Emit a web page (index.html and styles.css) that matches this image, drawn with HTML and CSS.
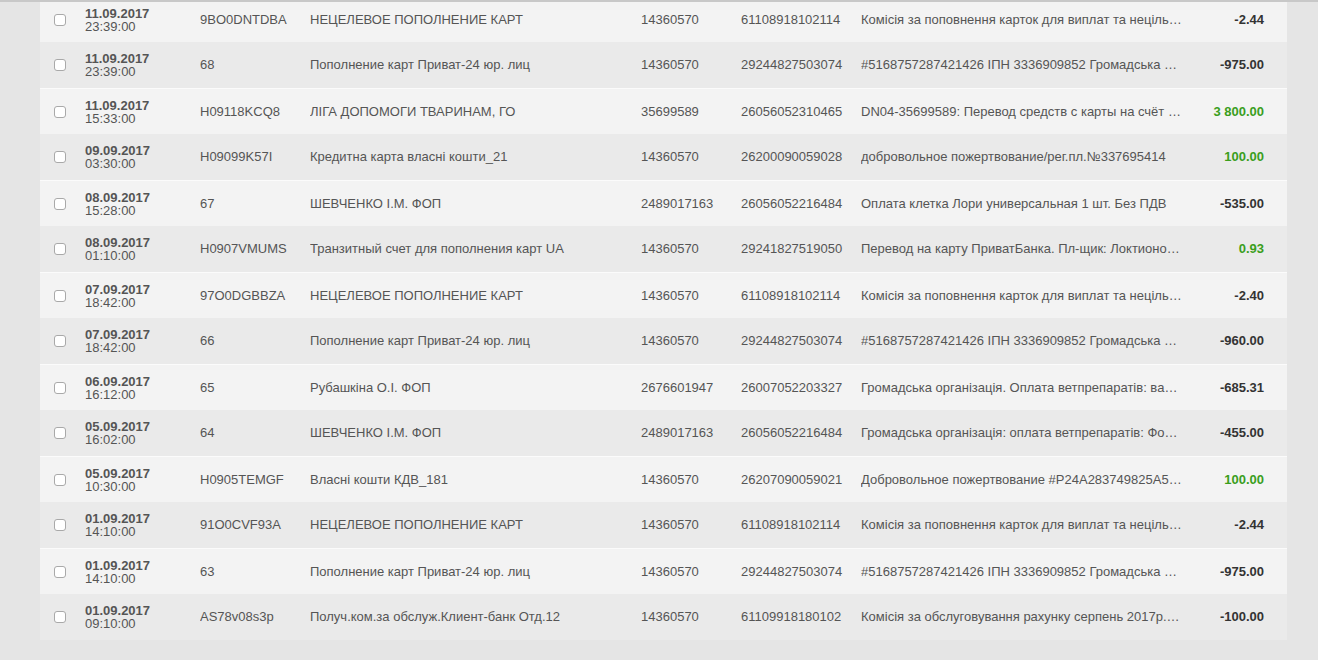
FILE: index.html
```
<!DOCTYPE html>
<html lang="uk">
<head>
<meta charset="utf-8">
<title>Виписка</title>
<link rel="stylesheet" href="styles.css">
</head>
<body>
<div class="topline"></div>
<div class="list">
  <div class="row odd"><div class="c-chk"><span class="chk"></span></div><div class="c-date"><b>11.09.2017</b><span>23:39:00</span></div><div>9BO0DNTDBA</div><div>НЕЦЕЛЕВОЕ ПОПОЛНЕНИЕ КАРТ</div><div>14360570</div><div>61108918102114</div><div class="c-desc">Комісія за поповнення карток для виплат та нецільових надходжень</div><div class="c-amt">-2.44</div></div>
  <div class="row even"><div class="c-chk"><span class="chk"></span></div><div class="c-date"><b>11.09.2017</b><span>23:39:00</span></div><div>68</div><div>Пополнение карт Приват-24 юр. лиц</div><div>14360570</div><div>29244827503074</div><div class="c-desc">#5168757287421426 ІПН 3336909852 Громадська організація</div><div class="c-amt">-975.00</div></div>
  <div class="row odd"><div class="c-chk"><span class="chk"></span></div><div class="c-date"><b>11.09.2017</b><span>15:33:00</span></div><div>H09118KCQ8</div><div>ЛІГА ДОПОМОГИ ТВАРИНАМ, ГО</div><div>35699589</div><div>26056052310465</div><div class="c-desc">DN04-35699589: Перевод средств с карты на счёт предприятия</div><div class="c-amt pos">3 800.00</div></div>
  <div class="row even"><div class="c-chk"><span class="chk"></span></div><div class="c-date"><b>09.09.2017</b><span>03:30:00</span></div><div>H09099K57I</div><div>Кредитна карта власні кошти_21</div><div>14360570</div><div>26200090059028</div><div class="c-desc">добровольное пожертвование/рег.пл.№337695414</div><div class="c-amt pos">100.00</div></div>
  <div class="row odd"><div class="c-chk"><span class="chk"></span></div><div class="c-date"><b>08.09.2017</b><span>15:28:00</span></div><div>67</div><div>ШЕВЧЕНКО І.М. ФОП</div><div>2489017163</div><div>26056052216484</div><div class="c-desc">Оплата клетка Лори универсальная 1 шт. Без ПДВ</div><div class="c-amt">-535.00</div></div>
  <div class="row even"><div class="c-chk"><span class="chk"></span></div><div class="c-date"><b>08.09.2017</b><span>01:10:00</span></div><div>H0907VMUMS</div><div>Транзитный счет для пополнения карт UA</div><div>14360570</div><div>29241827519050</div><div class="c-desc">Перевод на карту ПриватБанка. Пл-щик: Локтионова Ольга</div><div class="c-amt pos">0.93</div></div>
  <div class="row odd"><div class="c-chk"><span class="chk"></span></div><div class="c-date"><b>07.09.2017</b><span>18:42:00</span></div><div>97O0DGBBZA</div><div>НЕЦЕЛЕВОЕ ПОПОЛНЕНИЕ КАРТ</div><div>14360570</div><div>61108918102114</div><div class="c-desc">Комісія за поповнення карток для виплат та нецільових надходжень</div><div class="c-amt">-2.40</div></div>
  <div class="row even"><div class="c-chk"><span class="chk"></span></div><div class="c-date"><b>07.09.2017</b><span>18:42:00</span></div><div>66</div><div>Пополнение карт Приват-24 юр. лиц</div><div>14360570</div><div>29244827503074</div><div class="c-desc">#5168757287421426 ІПН 3336909852 Громадська організація</div><div class="c-amt">-960.00</div></div>
  <div class="row odd"><div class="c-chk"><span class="chk"></span></div><div class="c-date"><b>06.09.2017</b><span>16:12:00</span></div><div>65</div><div>Рубашкіна О.І. ФОП</div><div>2676601947</div><div>26007052203327</div><div class="c-desc">Громадська організація. Оплата ветпрепаратів: вакцина</div><div class="c-amt">-685.31</div></div>
  <div class="row even"><div class="c-chk"><span class="chk"></span></div><div class="c-date"><b>05.09.2017</b><span>16:02:00</span></div><div>64</div><div>ШЕВЧЕНКО І.М. ФОП</div><div>2489017163</div><div>26056052216484</div><div class="c-desc">Громадська організація: оплата ветпрепаратів: Фортеціум</div><div class="c-amt">-455.00</div></div>
  <div class="row odd"><div class="c-chk"><span class="chk"></span></div><div class="c-date"><b>05.09.2017</b><span>10:30:00</span></div><div>H0905TEMGF</div><div>Власні кошти КДВ_181</div><div>14360570</div><div>26207090059021</div><div class="c-desc">Добровольное пожертвование #P24A283749825A5010</div><div class="c-amt pos">100.00</div></div>
  <div class="row even"><div class="c-chk"><span class="chk"></span></div><div class="c-date"><b>01.09.2017</b><span>14:10:00</span></div><div>91O0CVF93A</div><div>НЕЦЕЛЕВОЕ ПОПОЛНЕНИЕ КАРТ</div><div>14360570</div><div>61108918102114</div><div class="c-desc">Комісія за поповнення карток для виплат та нецільових надходжень</div><div class="c-amt">-2.44</div></div>
  <div class="row odd"><div class="c-chk"><span class="chk"></span></div><div class="c-date"><b>01.09.2017</b><span>14:10:00</span></div><div>63</div><div>Пополнение карт Приват-24 юр. лиц</div><div>14360570</div><div>29244827503074</div><div class="c-desc">#5168757287421426 ІПН 3336909852 Громадська організація</div><div class="c-amt">-975.00</div></div>
  <div class="row even"><div class="c-chk"><span class="chk"></span></div><div class="c-date"><b>01.09.2017</b><span>09:10:00</span></div><div>AS78v08s3p</div><div>Получ.ком.за обслуж.Клиент-банк Отд.12</div><div>14360570</div><div>61109918180102</div><div class="c-desc">Комісія за обслуговування рахунку серпень 2017р. згідно тарифів</div><div class="c-amt">-100.00</div></div>
</div>
</body>
</html>
```

FILE: styles.css
```
html, body {
  margin: 0;
  padding: 0;
}
body {
  background: #e5e5e5;
  font-family: "Liberation Sans", Arial, sans-serif;
  font-size: 13px;
  color: #555;
  overflow: hidden;
}
.topline {
  position: fixed;
  top: 0;
  left: 0;
  right: 0;
  height: 2px;
  background: #c8c8c8;
  z-index: 2;
}
.list {
  margin: -4px 31px 0 40px;
  display: flex;
  flex-direction: column;
}
.row {
  display: grid;
  grid-template-columns: 45px 115px 110px 331px 100px 120px 334px 92px;
  align-items: center;
  height: 46px;
  box-sizing: border-box;
  white-space: nowrap;
}
.row.odd {
  background: #f3f3f3;
  border-top: 1px solid #fbfbfb;
}
.row.even {
  background: #eaeaea;
}
.row > div {
  overflow: hidden;
}
.row.even > div:not(.c-date):not(.c-chk) {
  padding-bottom: 2px;
}
.c-chk {
  padding-left: 14px;
  display: flex;
  align-items: center;
}
.chk {
  width: 10px;
  height: 10px;
  border: 1px solid #a9a9a9;
  border-radius: 3px;
  background: #fff;
}
.c-date {
  display: flex;
  flex-direction: column;
  line-height: 13px;
}
.c-date b {
  font-weight: bold;
  color: #555;
}
.c-desc {
  padding-right: 13px;
  text-overflow: ellipsis;
}
.c-amt {
  text-align: right;
  padding-right: 23px;
  font-weight: bold;
  color: #333;
}
.c-amt.pos {
  color: #3a9e1c;
}
```
